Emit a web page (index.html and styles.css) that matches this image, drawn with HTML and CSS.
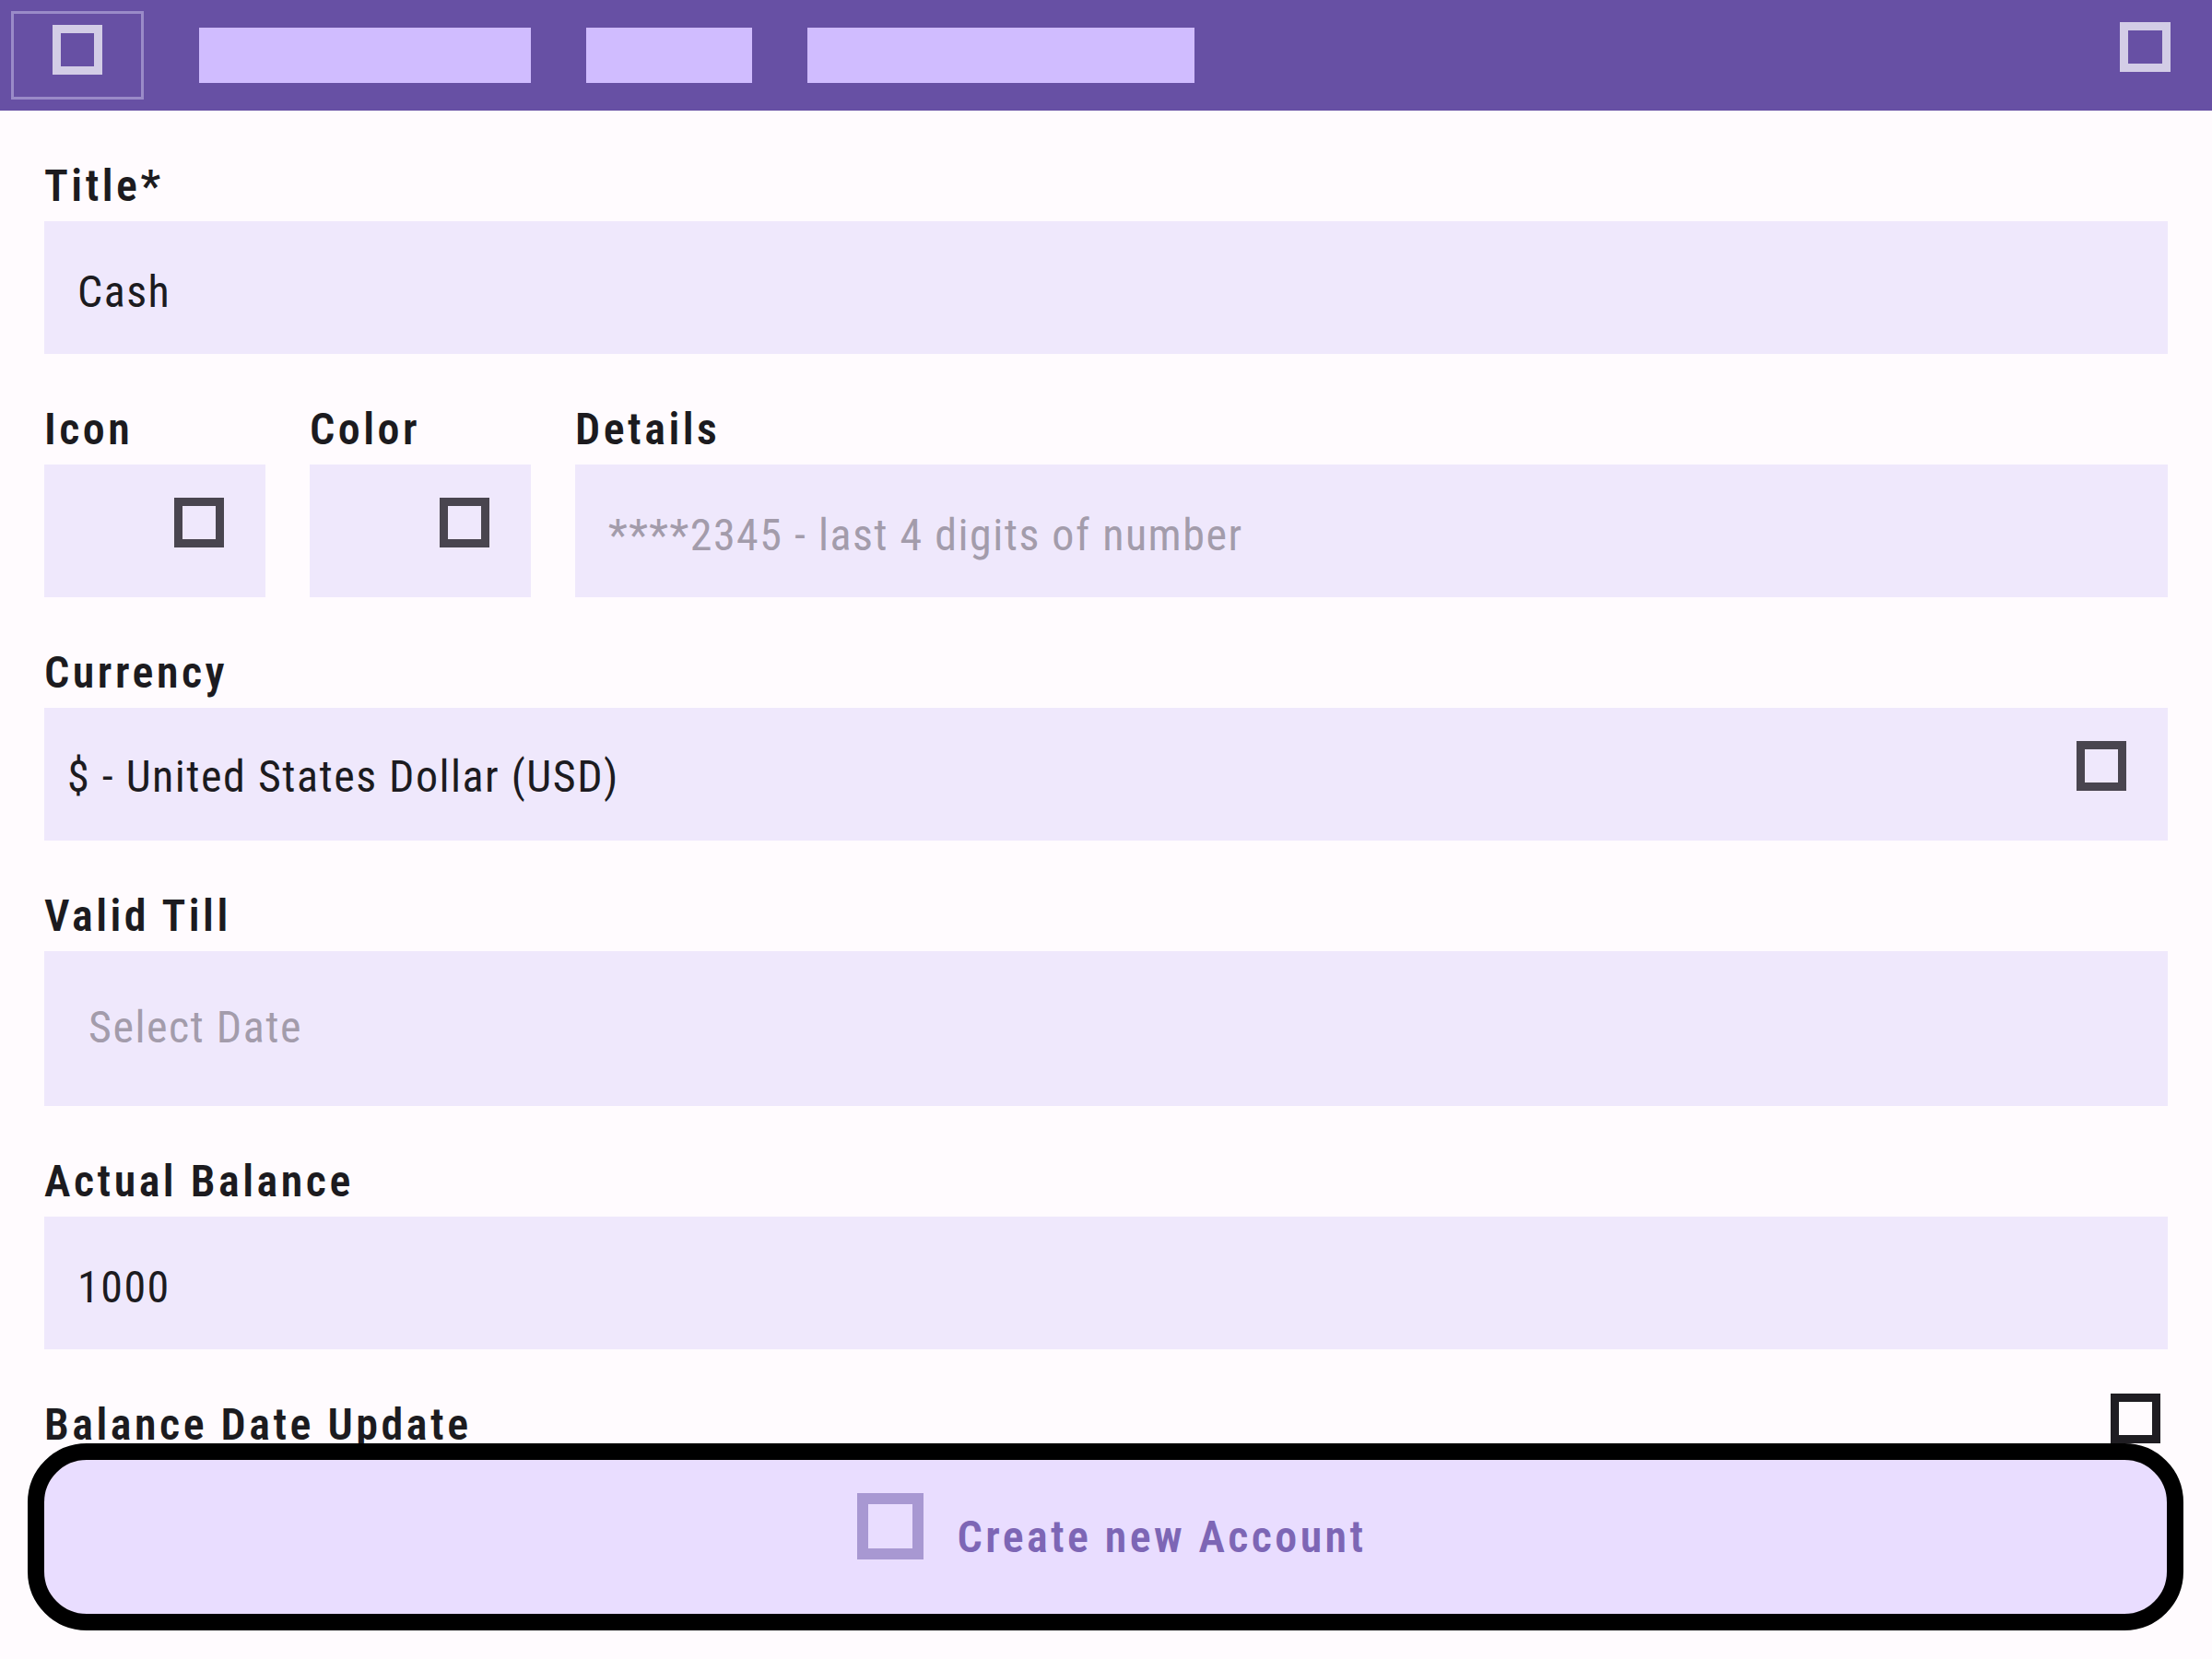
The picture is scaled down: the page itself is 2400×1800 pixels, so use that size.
FILE: index.html
```html
<!DOCTYPE html>
<html lang="en">
<head>
<meta charset="utf-8">
<title>Create Account</title>
<link rel="stylesheet" href="styles.css">
</head>
<body>
<header class="appbar">
  <div class="nav-btn"><span class="tofu tofu-header"></span></div>
  <div class="tabs">
    <span class="tab tab-1"></span>
    <span class="tab tab-2"></span>
    <span class="tab tab-3"></span>
  </div>
  <span class="tofu tofu-header tofu-right"></span>
</header>

<main class="form">
  <section class="field">
    <div class="label">Title*</div>
    <div class="input"><span class="value">Cash</span></div>
  </section>

  <section class="field-row">
    <div class="field">
      <div class="label">Icon</div>
      <div class="input picker"><span class="tofu tofu-input"></span></div>
    </div>
    <div class="field">
      <div class="label">Color</div>
      <div class="input picker"><span class="tofu tofu-input"></span></div>
    </div>
    <div class="field">
      <div class="label">Details</div>
      <div class="input"><span class="placeholder">****2345 - last 4 digits of number</span></div>
    </div>
  </section>

  <section class="field">
    <div class="label">Currency</div>
    <div class="input dropdown">
      <span class="value">$ - United States Dollar (USD)</span>
      <span class="tofu tofu-input"></span>
    </div>
  </section>

  <section class="field">
    <div class="label">Valid Till</div>
    <div class="input date"><span class="placeholder">Select Date</span></div>
  </section>

  <section class="field">
    <div class="label">Actual Balance</div>
    <div class="input"><span class="value">1000</span></div>
  </section>

  <section class="switch-row">
    <div class="label">Balance Date Update</div>
    <span class="tofu tofu-dark"></span>
  </section>
</main>

<button class="create-btn" type="button">
  <span class="tofu tofu-btn"></span>
  <span class="btn-text">Create new Account</span>
</button>
</body>
</html>
```

FILE: styles.css
```css
* {
  box-sizing: border-box;
}

html, body {
  margin: 0;
  padding: 0;
}

body {
  background: #fffbfe;
  font-family: Roboto, "Liberation Sans", sans-serif;
  font-stretch: 87.5%;
  color: #1c1b1f;
  width: 2400px;
  height: 1800px;
  overflow: hidden;
}

/* ---------- icons (missing-glyph boxes) ---------- */
.tofu {
  display: block;
  flex: none;
  width: 54px;
  height: 54px;
  border: 9px solid currentColor;
}

.tofu-header {
  color: #d3cde6;
}

.tofu-input {
  color: #49454f;
}

.tofu-dark {
  color: #1f1d22;
}

.tofu-btn {
  width: 72px;
  height: 72px;
  border-width: 12px;
  color: #a898d2;
}

/* ---------- app bar ---------- */
.appbar {
  height: 120px;
  background: #6750a4;
  display: flex;
  align-items: flex-start;
}

.nav-btn {
  width: 144px;
  height: 96px;
  margin: 12px 0 0 12px;
  border: 3px solid #9a8bc8;
  padding: 12px 0 0 42px;
}

.tabs {
  display: flex;
  gap: 60px;
  margin: 30px 0 0 60px;
}

.tab {
  display: block;
  height: 60px;
  background: #d0bcff;
}

.tab-1 { width: 360px; }
.tab-2 { width: 180px; }
.tab-3 { width: 420px; }

.tofu-right {
  margin: 24px 45px 0 auto;
  width: 55px;
}

/* ---------- form ---------- */
.form {
  padding: 54px 48px 0;
  display: flex;
  flex-direction: column;
  gap: 54px;
}

.label {
  font-size: 48px;
  line-height: 56px;
  font-weight: 600;
  letter-spacing: 3.5px;
  color: #1c1b1f;
  margin-bottom: 10px;
  white-space: nowrap;
}

.input {
  height: 144px;
  background: #efe8fc;
  display: flex;
  align-items: center;
  padding: 8px 36px 0;
  font-size: 48px;
  letter-spacing: 1.5px;
}

.value {
  color: #1c1b1f;
}

.placeholder {
  color: #a39cab;
}

.field-row {
  display: grid;
  grid-template-columns: 240px 240px 1fr;
  gap: 48px;
}

.picker {
  justify-content: flex-end;
  padding: 0 45px 18px 0;
}

.dropdown {
  justify-content: space-between;
  padding: 0 45px 0 25px;
}

.dropdown .value {
  padding-top: 4px;
}

.dropdown .tofu {
  margin-bottom: 18px;
}

.date {
  height: 168px;
  padding: 0 48px 4px;
}

.switch-row {
  display: flex;
  justify-content: space-between;
  align-items: flex-start;
}

.switch-row .tofu {
  margin: -6px 8px 0 0;
}

/* ---------- floating button ---------- */
.create-btn {
  position: fixed;
  left: 30px;
  right: 31px;
  bottom: 31px;
  height: 203px;
  border: 18px solid #000;
  border-radius: 64px;
  background: #e9ddff;
  display: flex;
  align-items: center;
  justify-content: center;
  gap: 36px;
  padding: 0 0 0 14px;
  font-family: Roboto, "Liberation Sans", sans-serif;
  font-stretch: 87.5%;
}

.create-btn .tofu-btn {
  margin-bottom: 23px;
}

.btn-text {
  font-size: 48px;
  font-weight: 600;
  letter-spacing: 3.4px;
  color: #7d66b5;
}
```
